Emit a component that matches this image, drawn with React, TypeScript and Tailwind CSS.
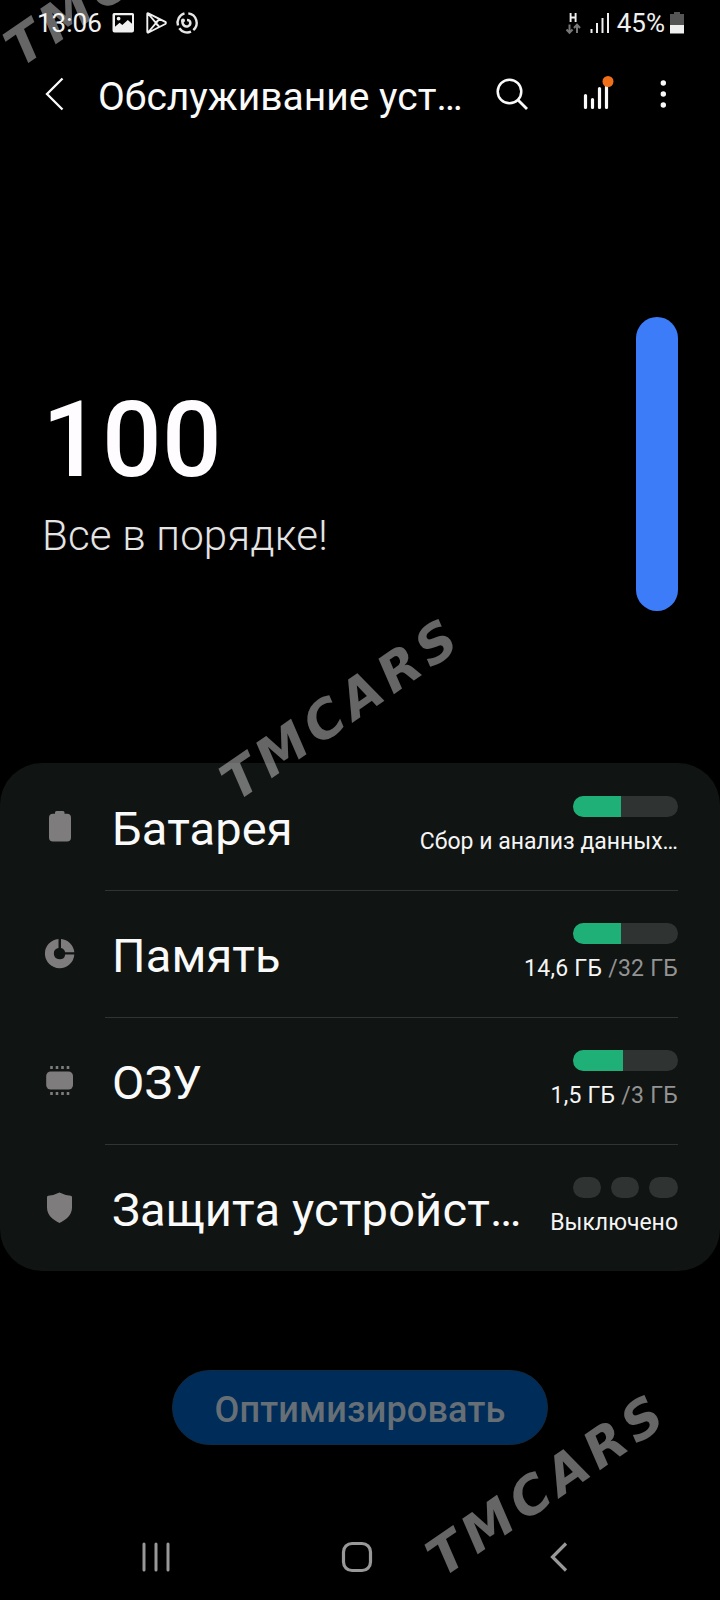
import type { ReactNode } from "react";

function StatusBar() {
  return (
    <div className="flex h-[46px] items-center pl-[37px] pr-[36px] text-[26px] leading-none text-[#f0f0f0]">
      <span>13:06</span>
      <svg className="ml-[10px]" width="90" height="46" viewBox="0 0 90 46" fill="none">
        <path
          fillRule="evenodd"
          d="M3 13h17.500a1.500 1.500 0 0 1 1.500 1.500v16a2 2 0 0 1-2 2H2.500a2 2 0 0 1-2-2V15A2 2 0 0 1 3 13ZM3 15.200v11.600l4.600-4 2.700 2.300 5.500-5.200 4.200 3.900v-8.600ZM6.600 16.700a1.900 1.900 0 1 1 0 3.800 1.900 1.900 0 0 1 0-3.800Z"
          fill="#f0f0f0"
        />
        <path
          d="M36.300 13.300Q35.300 12.800 35.300 14v17.500q0 1.500 1.200 1L53.300 24q1.200-1.200 0-2.200ZM36 13.500l11.500 13.600M36 32.500l11.500-13.600M47.500 18.900l-4 4.100 4 4.100"
          stroke="#f0f0f0"
          strokeWidth="1.900"
          strokeLinejoin="round"
        />
        <path
          d="M72.500 13.400A9.600 9.600 0 0 0 66 25.500M67.300 28.300a9.600 9.600 0 0 0 11.700 3.400M81.300 30.200a9.600 9.600 0 0 0-5-16.800"
          stroke="#e6e6e6"
          strokeWidth="2.400"
        />
        <path d="M70.500 20.500c-.6 4.500 2.700 7 5.700 5.700 3.200-1.600 2.800-6.200-1.200-6.200" stroke="#e6e6e6" strokeWidth="2.500" />
        <circle cx="71" cy="20.500" r="2" fill="#e6e6e6" />
      </svg>
      <svg className="ml-auto" width="46" height="46" viewBox="0 0 46 46" fill="none">
        <path d="M4.600 13v9M9.600 13v9M4.600 17.500h5" stroke="#f0f0f0" strokeWidth="1.900" />
        <path d="M3.500 24.500v8M.5 29.500l3 3.300 3-3.300M11 33v-8M8 28l3-3.300 3 3.300" stroke="#777" strokeWidth="2" />
        <path d="M25.500 29v4M31 23v10M36.500 18v15M42 13v20" stroke="#f0f0f0" strokeWidth="2" />
      </svg>
      <span className="ml-[5px]">45%</span>
      <svg className="ml-[5px]" width="14" height="46" viewBox="0 0 14 46">
        <path d="M4 12h6v2h4v11H0V14h4Z" fill="#555" />
        <path d="M0 25h14v8.500H0Z" fill="#f0f0f0" />
      </svg>
    </div>
  );
}

function AppBar() {
  return (
    <header className="flex h-24 items-center">
      <svg className="ml-[44px]" width="22" height="36" viewBox="0 0 22 36" fill="none">
        <path d="M18.500 2.500 3 18l15.500 15.500" stroke="#fafafa" strokeWidth="2.300" />
      </svg>
      <h1 className="ml-[32px] w-[390px] whitespace-nowrap pt-1.5 text-[39px] font-normal leading-none text-[#fafafa]">
        Обслуживание уст…
      </h1>
      <svg className="ml-[6px]" width="36" height="36" viewBox="0 0 36 36" fill="none">
        <circle cx="15.500" cy="15.500" r="11.800" stroke="#fafafa" strokeWidth="2.500" />
        <path d="m24 24 9 9" stroke="#fafafa" strokeWidth="2.800" />
      </svg>
      <svg className="ml-[50px]" width="36" height="44" viewBox="0 0 36 44" fill="none">
        <path d="M5.500 23.500v12M12.500 27.500v8M19.500 16.500v19M26.500 14v21.500" stroke="#fafafa" strokeWidth="3.200" strokeLinecap="round" />
        <circle cx="28" cy="9.500" r="5.500" fill="#f0701a" />
      </svg>
      <svg className="ml-[42px]" width="14" height="36" viewBox="0 0 14 36" fill="#fafafa">
        <circle cx="5.300" cy="7" r="2.700" />
        <circle cx="5.300" cy="18" r="2.700" />
        <circle cx="5.300" cy="29" r="2.700" />
      </svg>
    </header>
  );
}

function Meter({ value }: { value: number }) {
  return (
    <div className="h-[21px] w-[105px] overflow-hidden rounded-full bg-[#2f3331]">
      <div className="h-full bg-[#1fb078]" style={{ width: value }} />
    </div>
  );
}

function Row({ icon, label, meter, detail, last }: { icon: ReactNode; label: string; meter: ReactNode; detail: ReactNode; last?: boolean }) {
  return (
    <li className="flex h-[127px]">
      <div className="flex w-[105px] items-center pl-[44px]">
        <svg width="32" height="32" viewBox="0 0.5 32 32" fill="#7f7c7e">
          {icon}
        </svg>
      </div>
      <div className={`-mb-px mr-[42px] flex flex-1 justify-between border-b pl-[7px] ${last ? "border-transparent" : "border-[#303532]"}`}>
        <span className="self-center whitespace-nowrap pt-1 text-[47px] leading-none tracking-[0.15px] text-[#fafafa]">{label}</span>
        <div className="flex flex-col items-end gap-[11px] pt-[33px]">
          {meter}
          <span className="whitespace-nowrap text-[23px] leading-7 text-[#f5f5f5]">{detail}</span>
        </div>
      </div>
    </li>
  );
}

function Usage({ used, total }: { used: string; total: string }) {
  return (
    <span className="tracking-[0.25px]">
      {used} <span className="text-[#939393]">/{total}</span>
    </span>
  );
}

function Watermark({ place }: { place: string }) {
  return (
    <span
      className={`pointer-events-none absolute -translate-x-1/2 -translate-y-1/2 rotate-[-34.5deg] whitespace-nowrap pl-[6px] font-['DejaVu_Sans'] text-[52px] font-bold italic leading-none tracking-[6px] text-white/40 ${place}`}
    >
      TMCARS
    </span>
  );
}

export default function App() {
  return (
    <div className="relative flex h-[1600px] w-[720px] flex-col overflow-hidden bg-black font-[Roboto,sans-serif]">
      <StatusBar />
      <AppBar />
      <section className="flex h-[621px] items-start justify-between pl-[42px] pr-[42px] pt-[175px]">
        <div className="pt-[69px] text-[#fffcff]">
          <p className="text-[105px] font-medium leading-[110px] tracking-[0.3px]">100</p>
          <p className="mt-[15px] whitespace-nowrap text-[42px] font-light leading-[50px] tracking-[0.2px] text-[#e4e4e4]">Все в порядке!</p>
        </div>
        <div className="h-[294px] w-[42px] rounded-full bg-[#3c7cf8]" />
      </section>
      <ul className="h-[508px] rounded-[42px] bg-[#101412]">
        <Row
          icon={<path d="M11 2q0-1.500 1.500-1.500h6.500Q20.500.5 20.500 2v1.200H23q4 0 4 4V27q0 4-4 4H9q-4 0-4-4V7.200q0-4 4-4h2Z" />}
          label="Батарея"
          meter={<Meter value={48} />}
          detail="Сбор и анализ данных…"
        />
        <Row
          icon={
            <>
              <path d="M14.500 1.400V10.500A5.700 5.700 0 1 0 21.200 16.900H30.300A14.700 14.700 0 1 1 14.500 1.400Z" />
              <path d="M17 1.400A14.700 14.700 0 0 1 30.300 14.700H21.200A5.700 5.700 0 0 0 17 10.500Z" />
            </>
          }
          label="Память"
          meter={<Meter value={48} />}
          detail={<Usage used="14,6 ГБ" total="32 ГБ" />}
        />
        <Row
          icon={
            <>
              <rect x="2.200" y="7" width="26.800" height="18" rx="4.500" />
              <path d="M7.500 1.500v3M13 1.500v3M18.500 1.500v3M24 1.500v3M7.500 27.500v3M13 27.500v3M18.500 27.500v3M24 27.500v3" stroke="#7f7c7e" strokeWidth="2.600" />
            </>
          }
          label="ОЗУ"
          meter={<Meter value={50} />}
          detail={<Usage used="1,5 ГБ" total="3 ГБ" />}
        />
        <Row
          last
          icon={<path d="M15.500 1q6 3 11.300 3.300 1.200.2 1.200 1.200v10.500c0 7.500-6 12.500-12.500 15.500C9 28.500 3 23.500 3 16V5.500q0-1 1.200-1.200Q9.500 4 15.500 1Z" />}
          label="Защита устройст…"
          meter={
            <div className="flex gap-2.5">
              <span className="h-[21px] w-[28px] rounded-full bg-[#2f3331]" />
              <span className="h-[21px] w-[28px] rounded-full bg-[#2f3331]" />
              <span className="h-[21px] w-[29px] rounded-full bg-[#2f3331]" />
            </div>
          }
          detail="Выключено"
        />
      </ul>
      <button className="mt-[99px] h-[75px] w-[376px] self-center rounded-full border border-[#12293f] bg-[#002c59] pt-[4px] text-[36px] font-medium leading-none tracking-[0.2px] text-[#666f75]">
        Оптимизировать
      </button>
      <nav className="mt-[90px] flex items-center">
        <svg className="ml-[140px]" width="32" height="44" viewBox="0 0 32 44" stroke="#989898" strokeWidth="3" strokeLinecap="round">
          <path d="M4 9v26M16 9v26M28 9v26" />
        </svg>
        <svg className="ml-[165px]" width="40" height="44" viewBox="0 0 40 44" fill="none" stroke="#989898" strokeWidth="3.200">
          <rect x="6.500" y="8.500" width="27" height="27" rx="8.500" />
        </svg>
        <svg className="ml-[169px]" width="28" height="44" viewBox="0 0 28 44" fill="none" stroke="#989898" strokeWidth="3.200">
          <path d="M20 8.500 6.500 22 20 35.500" />
        </svg>
      </nav>
      <Watermark place="left-[123px] top-[-24px]" />
      <Watermark place="left-[339px] top-[710px]" />
      <Watermark place="left-[545px] top-[1486px]" />
    </div>
  );
}
